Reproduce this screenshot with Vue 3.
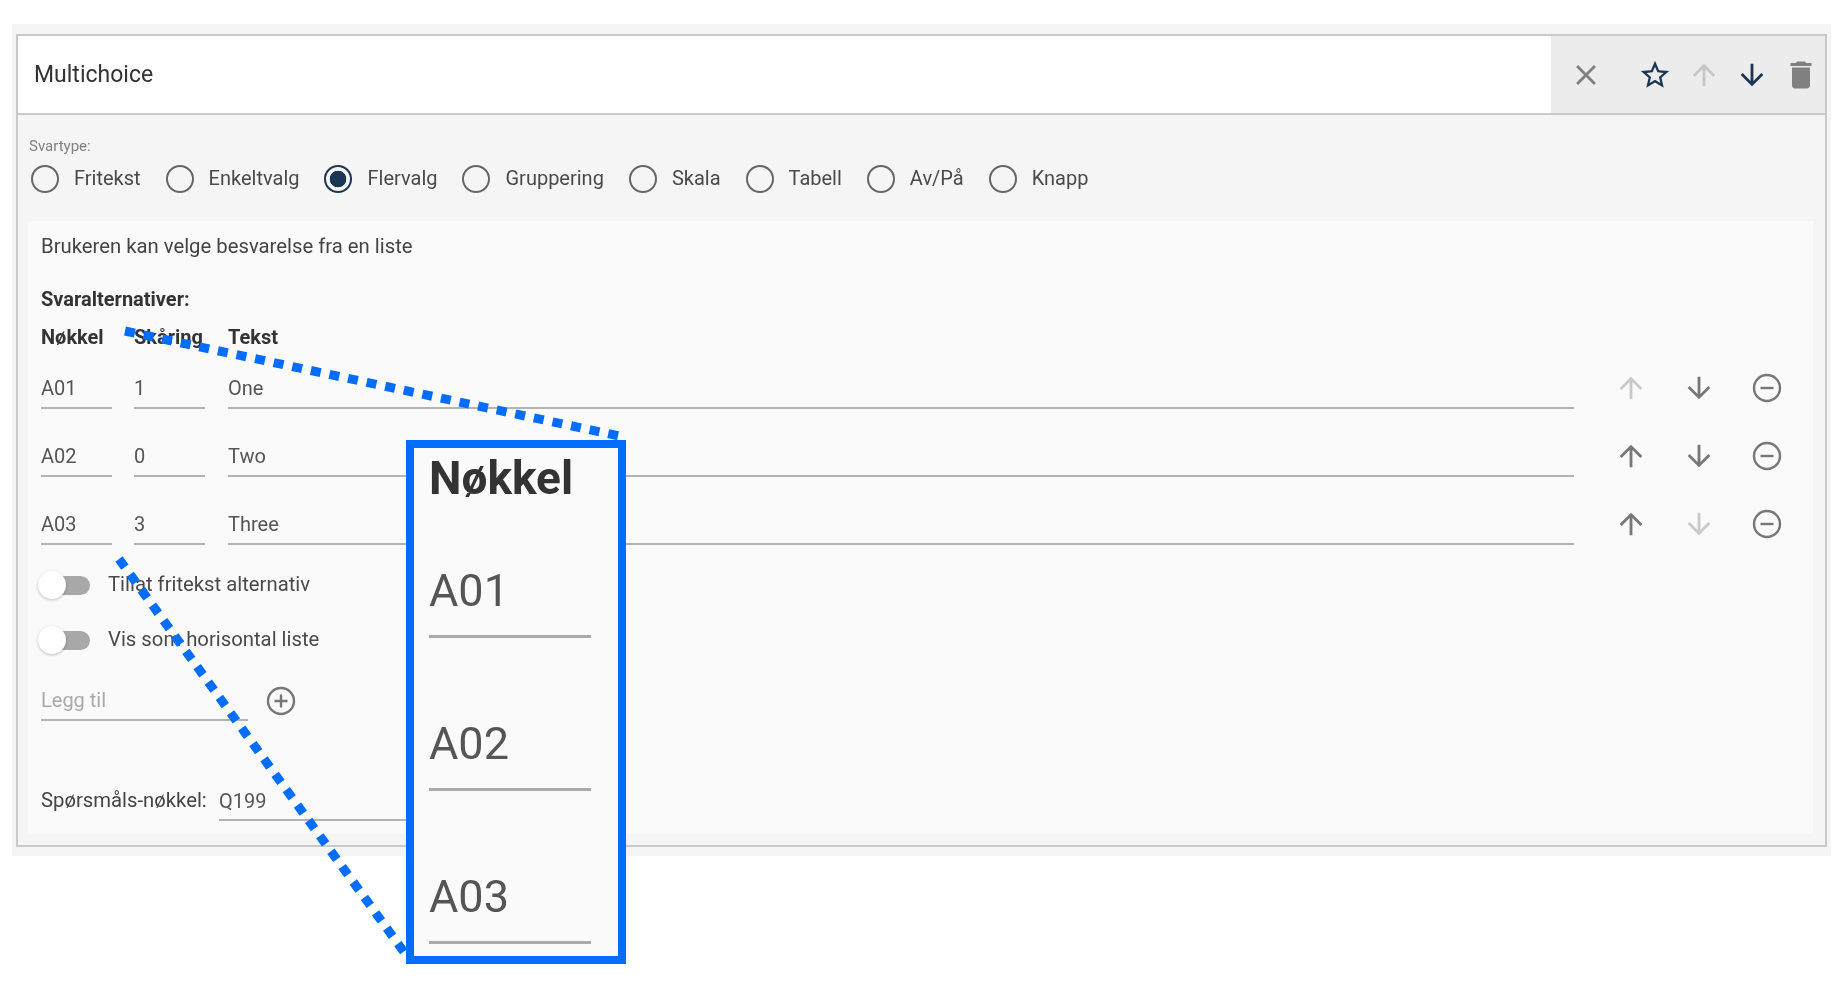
<script setup>
const types = [
  { label: 'Fritekst' },
  { label: 'Enkeltvalg' },
  { label: 'Flervalg', checked: true },
  { label: 'Gruppering' },
  { label: 'Skala' },
  { label: 'Tabell' },
  { label: 'Av/På' },
  { label: 'Knapp' },
]

const options = [
  { key: 'A01', score: '1', text: 'One', upOff: true },
  { key: 'A02', score: '0', text: 'Two' },
  { key: 'A03', score: '3', text: 'Three', downOff: true },
]

const toggles = ['Tillat fritekst alternativ', 'Vis som horisontal liste']

const arrowUp = 'M4 12l1.41 1.41L11 7.83V20h2V7.83l5.58 5.59L20 12l-8-8-8 8z'
const arrowDown = 'M20 12l-1.41-1.41L13 16.17V4h-2v12.17l-5.58-5.59L4 12l8 8 8-8z'
</script>

<template>
  <div class="page">
    <div class="wrap">
      <div class="card">
        <div class="header">
          <div class="title">Multichoice</div>
          <div class="tools">
            <svg class="tool close" viewBox="0 0 24 24"><path d="M19 6.41L17.59 5 12 10.59 6.41 5 5 6.41 10.59 12 5 17.59 6.41 19 12 13.41 17.59 19 19 17.59 13.41 12z" /></svg>
            <svg class="tool star" viewBox="0 0 24 24"><path d="M22 9.24l-7.19-.62L12 2 9.19 8.63 2 9.24l5.46 4.73L5.82 21 12 17.27 18.18 21l-1.63-7.03L22 9.24zM12 15.4l-3.76 2.27 1-4.28-3.32-2.88 4.38-.38L12 6.1l1.71 4.04 4.38.38-3.32 2.88 1 4.28L12 15.4z" /></svg>
            <svg class="tool off" viewBox="0 0 24 24"><path :d="arrowUp" /></svg>
            <svg class="tool navy" viewBox="0 0 24 24"><path :d="arrowDown" /></svg>
            <svg class="tool trash" viewBox="0 0 24 24"><path d="M6 19c0 1.1.9 2 2 2h8c1.1 0 2-.9 2-2V7H6v12zM19 4h-3.5l-1-1h-5l-1 1H5v2h14V4z" /></svg>
          </div>
        </div>

        <div class="body">
          <div class="type-label">Svartype:</div>
          <div class="radios">
            <label v-for="t in types" :key="t.label" class="radio">
              <span class="dot" :class="{ checked: t.checked }"></span>
              <span>{{ t.label }}</span>
            </label>
          </div>

          <div class="panel">
            <div class="desc">Brukeren kan velge besvarelse fra en liste</div>
            <div class="heading">Svaralternativer:</div>

            <div class="row head">
              <div class="c-key">Nøkkel</div>
              <div class="c-score">Skåring</div>
              <div class="c-text">Tekst</div>
            </div>

            <div v-for="o in options" :key="o.key" class="row option">
              <input class="field c-key" :value="o.key" />
              <input class="field c-score" :value="o.score" />
              <input class="field c-text" :value="o.text" />
              <div class="actions">
                <svg class="act" :class="{ off: o.upOff }" viewBox="0 0 24 24"><path :d="arrowUp" /></svg>
                <svg class="act" :class="{ off: o.downOff }" viewBox="0 0 24 24"><path :d="arrowDown" /></svg>
                <svg class="round" viewBox="0 0 34 34">
                  <circle cx="17" cy="17" r="13" />
                  <path d="M10.500 17h13" />
                </svg>
              </div>
            </div>

            <div class="toggles">
              <div v-for="t in toggles" :key="t" class="toggle">
                <span class="track"><span class="thumb"></span></span>
                <span class="toggle-label">{{ t }}</span>
              </div>
            </div>

            <div class="add">
              <input class="field add-input" placeholder="Legg til" />
              <svg class="round" viewBox="0 0 34 34">
                <circle cx="17" cy="17" r="13" />
                <path d="M10.500 17h13M17 10.500v13" />
              </svg>
            </div>

            <div class="qkey">
              <label class="qkey-label">Spørsmåls-nøkkel:</label>
              <input class="field qkey-input" value="Q199" />
            </div>
          </div>
        </div>
      </div>
    </div>

    <!-- zoom callout drawn on top of the form -->
    <svg class="leaders" width="1847" height="985">
      <path d="M125 331L624 437M119 559L404 952" />
    </svg>
    <div class="callout">
      <div class="zoom-head">Nøkkel</div>
      <div v-for="o in options" :key="o.key" class="zoom-cell">{{ o.key }}</div>
    </div>
  </div>
</template>

<style scoped>
.page {
  position: relative;
  width: 1847px;
  height: 985px;
  padding-top: 24px;
  box-sizing: border-box;
  overflow: hidden;
  background: #fff;
  font-family: Roboto, "Liberation Sans", sans-serif;
  font-size: 20px;
  color: #444;
  filter: blur(0.45px);
}

.wrap {
  margin-left: 12px;
  width: 1819px;
  height: 832px;
  box-sizing: border-box;
  padding: 10px 4px 9px;
  background: #f5f5f5;
}

.card {
  height: 100%;
  box-sizing: border-box;
  border: 2px solid #c9c9c9;
  display: flex;
  flex-direction: column;
}

.header {
  display: flex;
  height: 79px;
  box-sizing: border-box;
  border-bottom: 2px solid #c9c9c9;
  background: #fff;
}

.title {
  flex: 1;
  padding: 24px 0 0 16px;
  font-size: 23px;
  line-height: 30px;
  color: #333;
}

.tools {
  width: 274px;
  box-sizing: border-box;
  padding-left: 18px;
  display: flex;
  align-items: center;
  background: #ececec;
}

.tool {
  width: 34px;
  height: 34px;
  fill: #808080;
  flex: none;
}

.tool.close {
  margin-right: 35px;
}

.tool.star {
  fill: #1c3553;
  margin-right: 15px;
}

.tool.off {
  fill: #c6c6c6;
  margin-right: 14px;
}

.tool.navy {
  fill: #1c3553;
  margin-right: 14px;
}

.tool.trash {
  width: 36px;
  height: 36px;
}

.body {
  flex: 1;
  display: flex;
  flex-direction: column;
  padding: 0 12px 11px 10px;
}

.type-label {
  margin-top: 22px;
  margin-left: 1px;
  font-size: 15px;
  line-height: 18px;
  color: #808080;
}

.radios {
  display: flex;
  margin-top: 10px;
  margin-left: 3px;
  gap: 25px;
}

.radio {
  display: flex;
  align-items: center;
  gap: 15px;
  height: 28px;
  color: #4a4a4a;
}

.radio > span:last-child {
  padding-bottom: 3px;
}

.dot {
  width: 28px;
  height: 28px;
  box-sizing: border-box;
  border: 2.5px solid #666;
  border-radius: 50%;
  flex: none;
}

.dot.checked {
  border-color: #1c3553;
  background: radial-gradient(circle, #1c3553 0 8px, transparent 8.6px);
}

.panel {
  flex: 1;
  margin-top: 28px;
  padding: 13px 12px 0 13px;
  background: #fafafa;
}

.desc {
  font-size: 20.3px;
  line-height: 24px;
}

.heading {
  margin-top: 29px;
  font-weight: 700;
  line-height: 24px;
  color: #333;
}

.row {
  display: flex;
}

.head {
  margin-top: 14px;
  line-height: 24px;
  font-weight: 700;
  color: #333;
}

.option {
  height: 44px;
  align-items: stretch;
}

.head + .option {
  margin-top: 16px;
}

.option + .option {
  margin-top: 24px;
}

.c-key {
  width: 71px;
  margin-right: 22px;
  flex: none;
}

.c-score {
  width: 71px;
  margin-right: 23px;
  flex: none;
}

.c-text {
  flex: 1;
  min-width: 0;
}

.field {
  box-sizing: border-box;
  border: 0;
  border-bottom: 2px solid #b3b3b3;
  outline: 0;
  padding: 4px 0 0;
  background: transparent;
  font: inherit;
  color: #555;
}

.field::placeholder {
  color: #aaa;
  opacity: 1;
}

.actions {
  display: flex;
  align-items: center;
  gap: 34px;
  margin-left: 40px;
  padding-top: 2px;
  width: 187px;
  flex: none;
}

.act {
  width: 34px;
  height: 34px;
  fill: #777;
  flex: none;
}

.act.off {
  fill: #c9c9c9;
}

.round {
  width: 34px;
  height: 34px;
  flex: none;
  fill: none;
  stroke: #777;
  stroke-width: 2.4;
}

.toggles {
  margin-top: 26px;
  display: flex;
  flex-direction: column;
  gap: 27px;
}

.toggle {
  display: flex;
  align-items: center;
  height: 28px;
}

.track {
  position: relative;
  width: 51px;
  height: 19px;
  margin-left: -2px;
  border-radius: 10px;
  background: #a8a8a8;
  flex: none;
}

.thumb {
  position: absolute;
  left: -1px;
  top: -5px;
  width: 28px;
  height: 28px;
  border-radius: 50%;
  background: #fff;
  box-shadow: 0 1px 3px rgba(0, 0, 0, 0.25);
}

.toggle-label {
  margin-left: 18px;
  padding-bottom: 2px;
  font-size: 20.3px;
  color: #4a4a4a;
}

.add {
  margin-top: 27px;
  display: flex;
  align-items: center;
  gap: 16px;
}

.add-input {
  width: 207px;
  height: 40px;
  padding-top: 0;
}

.qkey {
  margin-top: 60px;
  display: flex;
  align-items: center;
}

.qkey-label {
  width: 178px;
  padding-bottom: 2px;
  font-size: 20.3px;
  flex: none;
}

.qkey-input {
  width: 300px;
  height: 40px;
  padding-top: 2px;
}

.leaders {
  position: absolute;
  left: 0;
  top: 0;
  pointer-events: none;
}

.leaders path {
  fill: none;
  stroke: #006dff;
  stroke-width: 9;
  stroke-dasharray: 10 9;
}

.callout {
  position: absolute;
  left: 406px;
  top: 440px;
  width: 220px;
  height: 524px;
  box-sizing: border-box;
  border: 8px solid #006dff;
  padding: 0 15px;
  background: #fafafa;
  font-size: 45px;
  color: #555;
}

.zoom-head {
  height: 60px;
  line-height: 60px;
  font-size: 46px;
  font-weight: 700;
  color: #333;
}

.zoom-cell {
  width: 162px;
  box-sizing: border-box;
  margin-top: 78px;
  padding-bottom: 16px;
  line-height: 56px;
  border-bottom: 3px solid #aaa;
}

.zoom-head + .zoom-cell {
  margin-top: 55px;
}
</style>
